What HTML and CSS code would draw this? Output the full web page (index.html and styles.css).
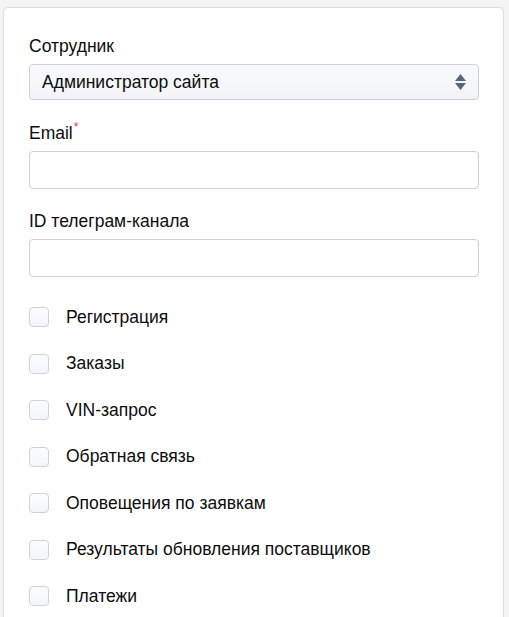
FILE: index.html
```html
<!DOCTYPE html>
<html lang="ru">
<head>
<meta charset="utf-8">
<title>Сотрудник</title>
<link rel="stylesheet" href="styles.css">
</head>
<body>
<div class="card">
  <div class="field">
    <label class="label">Сотрудник</label>
    <div class="select">
      <span>Администратор сайта</span>
      <svg class="arrows" width="11" height="16" viewBox="0 0 11 16"><path d="M5.5 0 L11 7 H0 Z" fill="#56677a"/><path d="M0 9 H11 L5.5 16 Z" fill="#56677a"/></svg>
    </div>
  </div>
  <div class="field field-mid">
    <label class="label">Email<span class="req">*</span></label>
    <div class="input"></div>
  </div>
  <div class="field field-last">
    <label class="label">ID телеграм-канала</label>
    <div class="input"></div>
  </div>
  <ul class="checks">
    <li class="check"><span class="box"></span><span>Регистрация</span></li>
    <li class="check"><span class="box"></span><span>Заказы</span></li>
    <li class="check"><span class="box"></span><span>VIN-запрос</span></li>
    <li class="check"><span class="box"></span><span>Обратная связь</span></li>
    <li class="check"><span class="box"></span><span>Оповещения по заявкам</span></li>
    <li class="check"><span class="box"></span><span>Результаты обновления поставщиков</span></li>
    <li class="check"><span class="box"></span><span>Платежи</span></li>
  </ul>
</div>
</body>
</html>
```
FILE: styles.css
```css
html, body {
  margin: 0;
  padding: 0;
  background: #f4f4f4;
  font-family: "Liberation Sans", Arial, sans-serif;
  font-size: 17.5px;
  color: #0d0d0d;
}
body {
  padding: 7px 5px 0 3px;
  height: 617px;
  overflow: hidden;
  box-sizing: border-box;
}
.card {
  background: #fff;
  border: 1px solid #dcdcdc;
  border-radius: 5px;
  padding: 27px 24px 40px 25px;
  min-height: 700px;
}
.field {
  margin-bottom: 22px;
}
.field-mid {
  margin-bottom: 21px;
}
.field-last {
  margin-bottom: 0;
}
.label {
  display: block;
  line-height: 22px;
  height: 22px;
  margin-bottom: 7px;
}
.req {
  color: #e8343f;
  font-size: 12px;
  line-height: 0;
  position: relative;
  top: -8px;
  margin-left: 1px;
}
.select {
  height: 36px;
  box-sizing: border-box;
  border: 1px solid #cdd1d5;
  border-radius: 4px;
  background: linear-gradient(#f8f9fb, #f2f4f7);
  display: flex;
  align-items: center;
  justify-content: space-between;
  padding: 0 12px;
  color: #0d0d0d;
}
.arrows {
  display: block;
}
.input {
  height: 38px;
  box-sizing: border-box;
  border: 1px solid #cfd1d4;
  border-radius: 4px;
  background: #fff;
}
.checks {
  list-style: none;
  margin: 28px 0 0 0;
  padding: 0;
}
.check {
  display: flex;
  align-items: center;
  height: 24px;
  margin-bottom: 22.5px;
}
.box {
  width: 20px;
  height: 20px;
  box-sizing: border-box;
  border: 1px solid #cfd3d8;
  border-radius: 4px;
  background: linear-gradient(#fbfcfd, #f3f5f8);
  margin-right: 17px;
  flex: none;
}
```
